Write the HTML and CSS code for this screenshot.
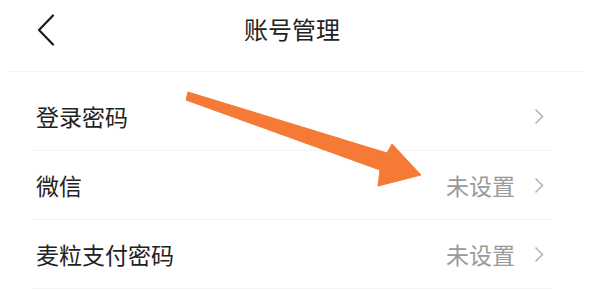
FILE: index.html
```html
<!DOCTYPE html>
<html lang="zh-CN">
<head>
<meta charset="utf-8">
<title>账号管理</title>
<link rel="stylesheet" href="styles.css">
</head>
<body>
<div class="page">
  <header class="topbar">
    <span class="back">
      <svg width="20" height="34" viewBox="0 0 20 34"><path d="M16 2.5 L2 17 L16 31.5" fill="none" stroke="#1a1a1a" stroke-width="2.2" stroke-linecap="round" stroke-linejoin="round"/></svg>
    </span>
    <h1 class="title">账号管理</h1>
  </header>
  <ul class="list">
    <li class="row">
      <span class="label">登录密码</span>
      <span class="right">
        <svg class="chev" width="10" height="17" viewBox="0 0 10 17"><path d="M1.5 1.5 L8.5 8.5 L1.5 15.5" fill="none" stroke="#b5b5b5" stroke-width="1.6"/></svg>
      </span>
    </li>
    <li class="row">
      <span class="label">微信</span>
      <span class="right">
        <span class="value">未设置</span>
        <svg class="chev" width="10" height="17" viewBox="0 0 10 17"><path d="M1.5 1.5 L8.5 8.5 L1.5 15.5" fill="none" stroke="#b5b5b5" stroke-width="1.6"/></svg>
      </span>
    </li>
    <li class="row">
      <span class="label">麦粒支付密码</span>
      <span class="right">
        <span class="value">未设置</span>
        <svg class="chev" width="10" height="17" viewBox="0 0 10 17"><path d="M1.5 1.5 L8.5 8.5 L1.5 15.5" fill="none" stroke="#b5b5b5" stroke-width="1.6"/></svg>
      </span>
    </li>
  </ul>
  <svg class="arrow" width="596" height="291" viewBox="0 0 596 291">
    <polygon points="188,92 387,153 392,144 421,175 378,186 380,170 186,100" fill="#f47a36" stroke="#f47a36" stroke-width="1" stroke-linejoin="round"/>
  </svg>
</div>
</body>
</html>
```

FILE: styles.css
```css
* { box-sizing: border-box; }
html, body {
  margin: 0;
  padding: 0;
  background: #ffffff;
}
body {
  font-family: "Noto Sans CJK SC", "Noto Sans", sans-serif;
  color: #1f1f1f;
}
.page {
  position: relative;
  width: 596px;
  height: 291px;
  overflow: hidden;
}
.topbar {
  height: 72px;
  margin: 0 12px 0 8px;
  border-bottom: 1px solid #f6f6f6;
  display: grid;
  grid-template-columns: 60px 1fr 60px;
  align-items: center;
}
.back {
  display: flex;
  align-items: center;
  padding-left: 29px;
  padding-bottom: 12px;
}
.title {
  margin: 0;
  text-align: center;
  font-size: 24px;
  font-weight: 400;
  color: #222;
  line-height: 1;
  padding-bottom: 13px;
  padding-right: 8px;
}
.list {
  list-style: none;
  margin: 10px 45px 0 33px;
  padding: 0;
}
.row {
  height: 69px;
  display: flex;
  align-items: center;
  justify-content: space-between;
  padding: 0 7px 0 3px;
  border-bottom: 1px solid #f3f3f3;
}
.label {
  font-size: 23px;
  color: #222;
  line-height: 1;
}
.right {
  display: flex;
  align-items: center;
  gap: 19px;
}
.value {
  font-size: 23px;
  color: #9a9a9a;
  line-height: 1;
}
.chev { display: block; }
.arrow {
  position: absolute;
  left: 0;
  top: 0;
  pointer-events: none;
}
```
